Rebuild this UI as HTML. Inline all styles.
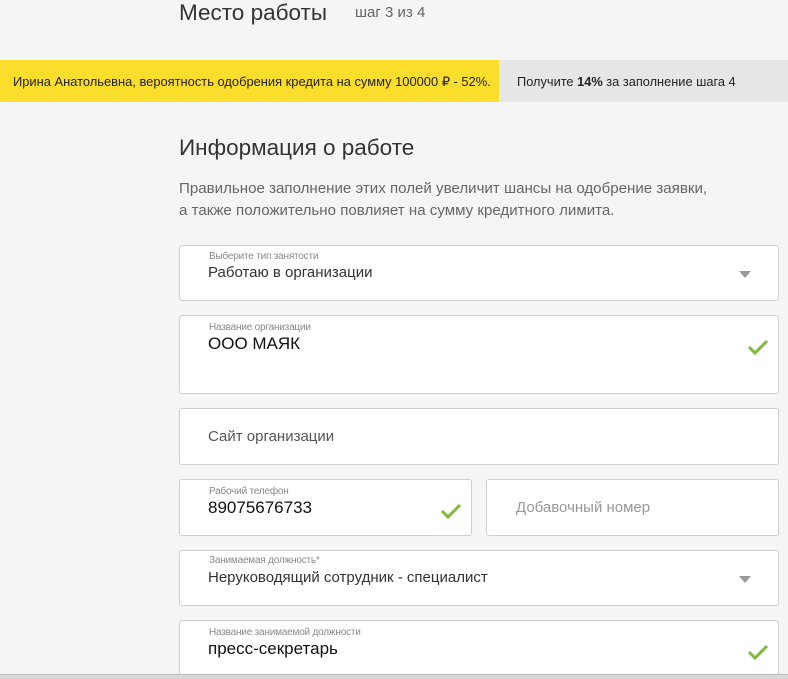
<!DOCTYPE html>
<html style="overflow:hidden;height:679px"><head><meta charset="utf-8"><style>
*{margin:0;padding:0;box-sizing:border-box}
body{width:788px;height:679px;background:#f5f5f5;font-family:"Liberation Sans",sans-serif;position:relative;overflow:hidden;color:#333}
.a{position:absolute}
.box{position:absolute;background:#fff;border:1px solid #cfcfcf;border-radius:3px}
.lab{position:absolute;left:29px;font-size:10px;color:#888;letter-spacing:-0.2px}
.val{position:absolute;left:28px;font-size:15px;color:#333}
.big{font-size:17px;color:#111}
.arr{position:absolute;right:27px;width:0;height:0;border-left:6px solid transparent;border-right:6px solid transparent;border-top:7px solid #999}
.chk{position:absolute;right:9px}
</style></head><body>
<div class="a" style="left:179px;top:0;font-size:22.5px;color:#333">Место работы</div>
<div class="a" style="left:355px;top:4px;font-size:15px;color:#666">шаг 3 из 4</div>
<div class="a" style="left:0;top:60px;width:788px;height:42px;background:#e6e6e6"></div>
<div class="a" style="left:0;top:60px;width:499px;height:42px;background:#fbdd2c"></div>
<div class="a" style="left:13px;top:74px;font-size:12.9px;color:#222">Ирина Анатольевна, вероятность одобрения кредита на сумму 100000 ₽ - 52%.</div>
<div class="a" style="left:517px;top:74px;font-size:12.8px;color:#222">Получите <b>14%</b> за заполнение шага 4</div>
<div class="a" style="left:179px;top:135px;font-size:22.5px;color:#333">Информация о работе</div>
<div class="a" style="left:179px;top:178px;font-size:15.1px;color:#666;line-height:22px">Правильное заполнение этих полей увеличит шансы на одобрение заявки,<br>а также положительно повлияет на сумму кредитного лимита.</div>

<div class="box" style="left:179px;top:245px;width:600px;height:56px"><div class="lab" style="top:5px">Выберите тип занятости</div><div class="val" style="top:18px">Работаю в организации</div><div class="arr" style="top:25px"></div></div>
<div class="box" style="left:179px;top:315px;width:600px;height:79px"><div class="lab" style="top:6px">Название организации</div><div class="val big" style="top:18px">ООО МАЯК</div><svg class="chk" style="top:22px" width="22" height="18"><path d="M2 9l6 6L20 3" fill="none" stroke="#7dbb3c" stroke-width="3"/></svg></div>
<div class="box" style="left:179px;top:408px;width:600px;height:57px"><div class="val" style="top:19px;color:#555">Сайт организации</div></div>
<div class="box" style="left:179px;top:479px;width:293px;height:57px"><div class="lab" style="top:6px">Рабочий телефон</div><div class="val big" style="top:18px">89075676733</div><svg class="chk" style="top:22px" width="22" height="18"><path d="M2 9l6 6L20 3" fill="none" stroke="#7dbb3c" stroke-width="3"/></svg></div>
<div class="box" style="left:486px;top:479px;width:293px;height:57px"><div class="val" style="left:29px;top:19px;color:#999">Добавочный номер</div></div>
<div class="box" style="left:179px;top:550px;width:600px;height:56px"><div class="lab" style="top:4px">Занимаемая должность*</div><div class="val" style="top:18px">Неруководящий сотрудник - специалист</div><div class="arr" style="top:25px"></div></div>
<div class="box" style="left:179px;top:620px;width:600px;height:70px"><div class="lab" style="top:6px">Название занимаемой должности</div><div class="val big" style="top:18px">пресс-секретарь</div><svg class="chk" style="top:22px" width="22" height="18"><path d="M2 9l6 6L20 3" fill="none" stroke="#7dbb3c" stroke-width="3"/></svg></div>
<div class="a" style="left:0;top:674px;width:788px;height:5px;background:#d8d8d8;border-top:1px solid #bbb"></div>
</body></html>
